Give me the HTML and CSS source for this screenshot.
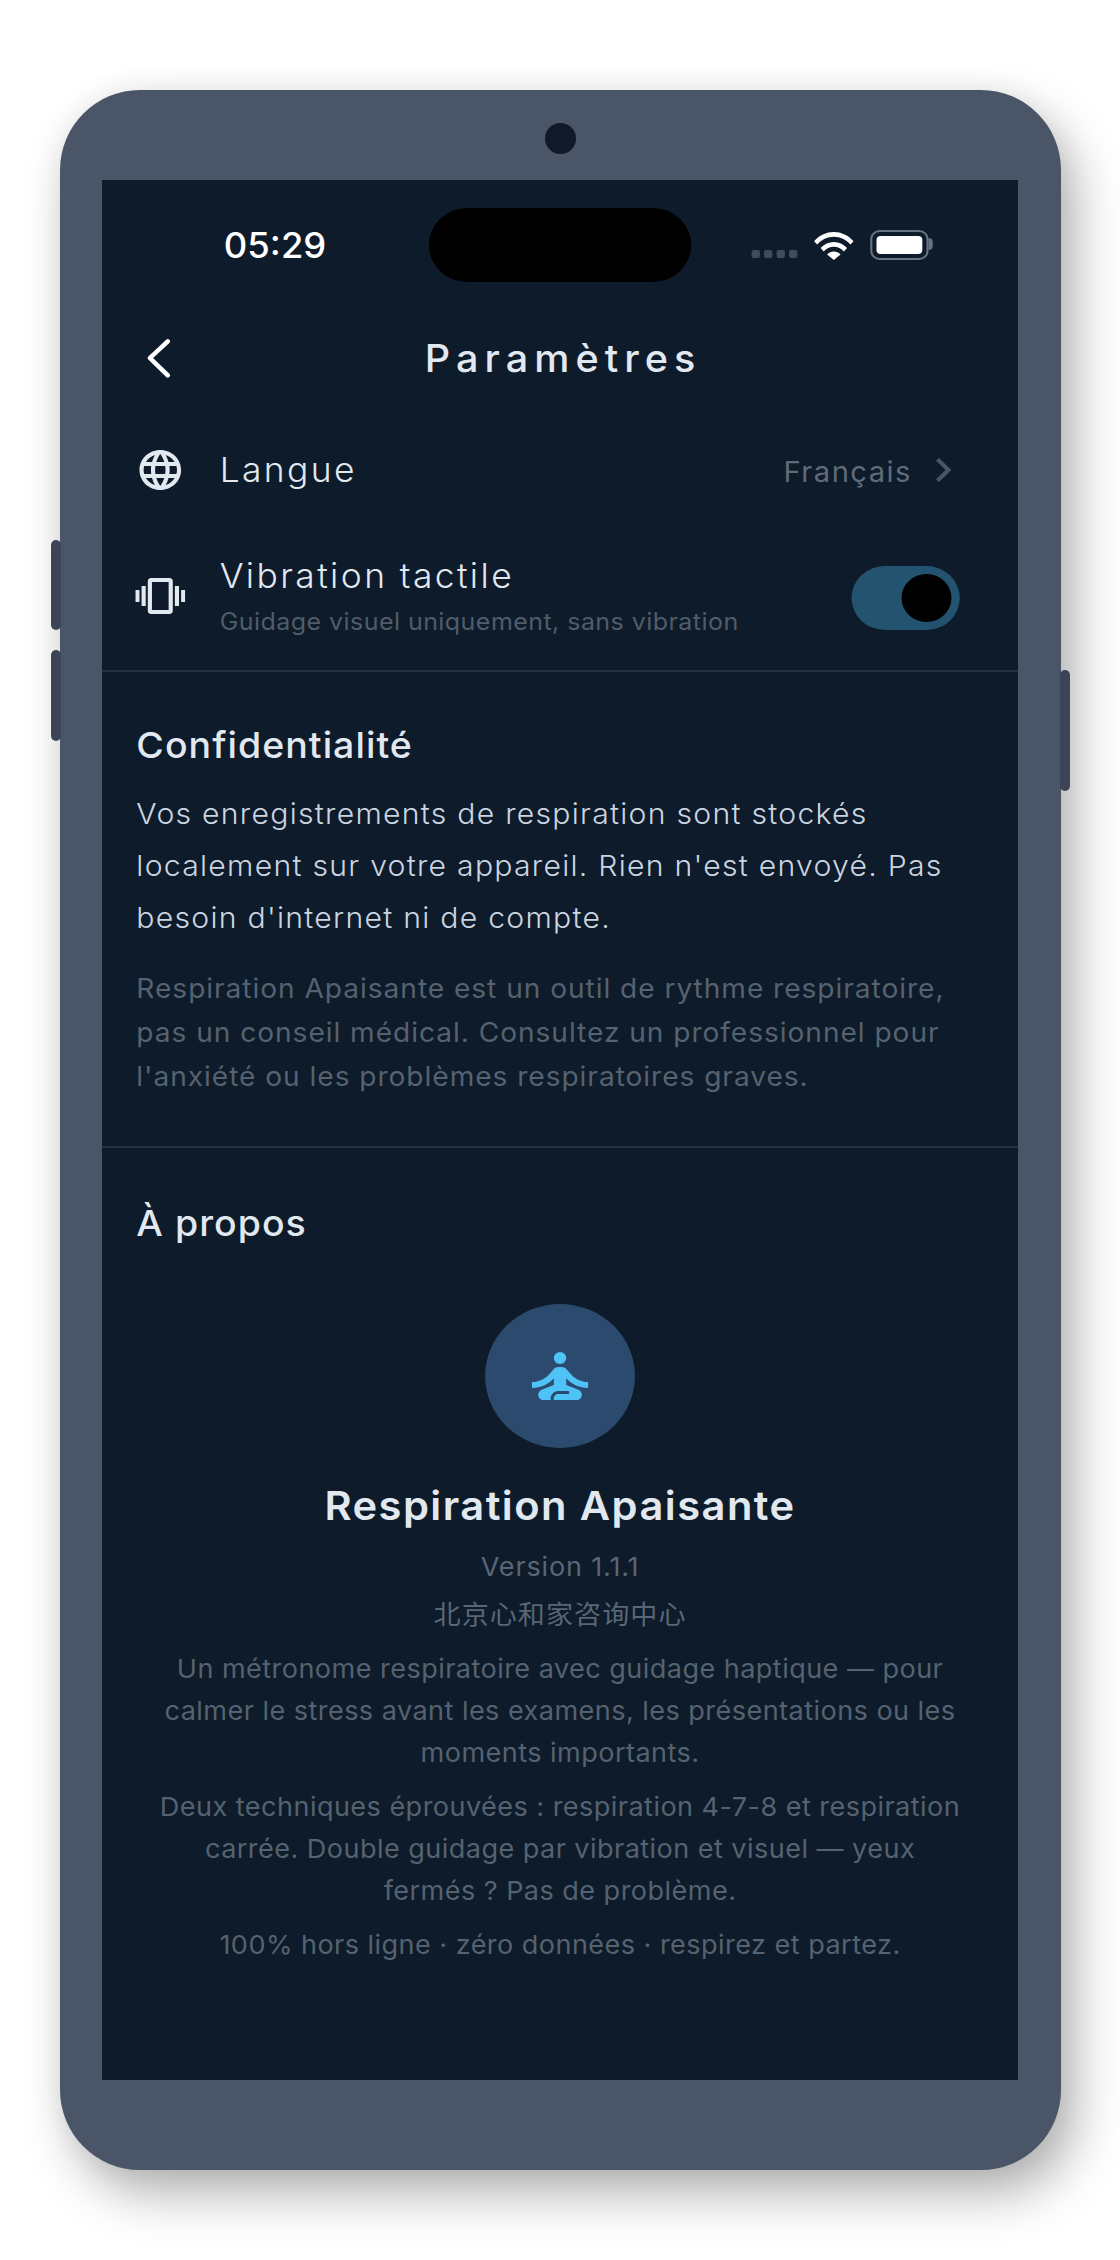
FILE: index.html
```html
<!DOCTYPE html>
<html lang="fr">
<head>
  <meta charset="UTF-8">
  <title>Paramètres</title>
  <link rel="stylesheet" href="styles.css">
</head>
<body>

  <div class="phone">
    <span class="side-btn vol-up"></span>
    <span class="side-btn vol-down"></span>
    <span class="side-btn power"></span>
    <div class="camera"></div>

    <div class="screen">
      <div class="app">

        <div class="status-bar">
          <span class="time">05:29</span>
          <div class="island"></div>
          <div class="status-icons">
            <div class="signal"><i></i><i></i><i></i><i></i></div>
            <svg class="wifi" viewBox="0 0 20 14" preserveAspectRatio="none">
              <path d="M0 4.6C2.6 1.7 6.1 0 10 0s7.4 1.7 10 4.6l-1.6 1.7C16.200 3.900 13.300 2.400 10 2.400S3.800 3.900 1.600 6.300z"/>
              <path d="M3.300 8C5.100 6.100 7.400 5 10 5s4.900 1.100 6.700 3l-1.600 1.700C13.800 8.300 12 7.400 10 7.400S6.200 8.300 4.900 9.700z"/>
              <path d="M6.600 11.300C7.500 10.400 8.700 9.800 10 9.800s2.500.6 3.400 1.500L10 14z"/>
            </svg>
            <div class="battery"><div class="battery-fill"></div></div>
          </div>
        </div>

        <header class="top-bar">
          <svg class="back" viewBox="0 0 24 24"><path d="M15.600 3.700L7 12l8.600 8.700"/></svg>
          <h1>Paramètres</h1>
        </header>

        <div class="row row-lang">
          <svg class="icon" viewBox="0 0 24 24"><path d="M11.990 2C6.470 2 2 6.480 2 12s4.470 10 9.990 10C17.520 22 22 17.520 22 12S17.520 2 11.990 2zm6.930 6h-2.950c-.32-1.250-.78-2.450-1.380-3.560 1.840.63 3.370 1.910 4.330 3.560zM12 4.040c.83 1.200 1.480 2.530 1.910 3.960h-3.820c.43-1.430 1.080-2.760 1.910-3.960zM4.260 14C4.100 13.360 4 12.690 4 12s.1-1.360.26-2h3.380c-.08.66-.14 1.320-.14 2 0 .68.06 1.340.14 2H4.260zm.82 2h2.950c.32 1.250.78 2.450 1.380 3.560-1.840-.63-3.370-1.900-4.330-3.560zm2.950-8H5.080c.96-1.660 2.490-2.930 4.330-3.560C8.810 5.550 8.350 6.750 8.030 8zM12 19.960c-.83-1.200-1.480-2.530-1.910-3.960h3.820c-.43 1.430-1.080 2.760-1.910 3.960zM14.340 14H9.660c-.09-.66-.16-1.320-.16-2 0-.68.07-1.350.16-2h4.680c.09.65.16 1.320.16 2 0 .68-.07 1.340-.16 2zm.25 5.560c.6-1.110 1.060-2.310 1.380-3.560h2.950c-.96 1.650-2.490 2.930-4.330 3.560zM16.360 14c.08-.66.14-1.320.14-2 0-.68-.06-1.340-.14-2h3.380c.16.64.26 1.310.26 2s-.1 1.360-.26 2h-3.380z"/></svg>
          <span class="row-title">Langue</span>
          <span class="row-value">Français</span>
          <svg class="chevron" viewBox="0 0 24 24"><path d="M10 6L8.590 7.410 13.170 12l-4.580 4.590L10 18l6-6z"/></svg>
        </div>

        <div class="row row-vib">
          <svg class="icon" viewBox="0 0 24 24"><path d="M0 15h2V9H0v6zm3 2h2V7H3v10zm19-8v6h2V9h-2zm-3 8h2V7h-2v10zM16.500 3h-9C6.670 3 6 3.670 6 4.500v15c0 .83.67 1.500 1.500 1.500h9c.83 0 1.500-.67 1.500-1.500v-15c0-.83-.67-1.500-1.500-1.500zM16 19H8V5h8v14z"/></svg>
          <div class="row-text">
            <div class="row-title">Vibration tactile</div>
            <div class="row-sub">Guidage visuel uniquement, sans vibration</div>
          </div>
          <div class="toggle"><div class="thumb"></div></div>
        </div>

        <section class="block privacy">
          <h2>Confidentialité</h2>
          <p class="lead">Vos enregistrements de respiration sont stockés localement sur votre appareil. Rien n'est envoyé. Pas besoin d'internet ni de compte.</p>
          <p class="note">Respiration Apaisante est un outil de rythme respiratoire, pas un conseil médical. Consultez un professionnel pour l'anxiété ou les problèmes respiratoires graves.</p>
        </section>

        <section class="block about">
          <h2>À propos</h2>
          <div class="logo">
            <svg viewBox="0 0 24 24"><circle cx="12" cy="6" r="2"/><path d="M21 16v-2c-2.240 0-4.160-.96-5.600-2.680l-1.340-1.600C13.680 9.260 13.120 9 12.530 9h-1.050c-.59 0-1.150.26-1.530.72l-1.340 1.600C7.160 13.040 5.240 14 3 14v2c2.770 0 5.190-1.170 7-3.250V15l-3.880 1.550c-.67.27-1.120.93-1.120 1.660C5 19.200 5.800 20 6.790 20H9v-.5c0-1.380 1.120-2.500 2.500-2.500h3c.28 0 .5.22.5.5s-.22.5-.5.5h-3c-.83 0-1.500.67-1.500 1.500v.5h7.210c.99 0 1.790-.8 1.790-1.790 0-.73-.45-1.390-1.120-1.660L14 15v-2.250c1.810 2.080 4.230 3.250 7 3.250z"/></svg>
          </div>
          <h3>Respiration Apaisante</h3>
          <div class="version">Version 1.1.1</div>
          <div class="company">北京心和家咨询中心</div>
          <p class="desc">Un métronome respiratoire avec guidage haptique — pour calmer le stress avant les examens, les présentations ou les moments importants.</p>
          <p class="desc">Deux techniques éprouvées&nbsp;: respiration 4-7-8 et respiration carrée. Double guidage par vibration et visuel — yeux fermés&nbsp;? Pas de problème.</p>
          <p class="desc">100% hors ligne · zéro données · respirez et partez.</p>
        </section>

      </div>
    </div>
  </div>

</body>
</html>
```

FILE: styles.css
```css
* {
  box-sizing: border-box;
  margin: 0;
  padding: 0;
}

body {
  background: #fff;
  font-family: Inter, "Noto Sans CJK SC", sans-serif;
  padding: 90px 60px;
}

/* device frame */
.phone {
  position: relative;
  width: 1001px;
  height: 2080px;
  padding: 90px 43px 90px 42px;
  background: #4a5568;
  border-radius: 80px;
  box-shadow: 14px 24px 50px rgba(0, 0, 0, 0.3), 0 0 30px rgba(0, 0, 0, 0.06);
}

.side-btn {
  position: absolute;
  background: #3c4558;
  width: 10px;
  border-radius: 5px;
}

.vol-up {
  left: -9px;
  top: 450px;
  height: 90px;
}

.vol-down {
  left: -9px;
  top: 560px;
  height: 91px;
}

.power {
  right: -9px;
  top: 580px;
  height: 121px;
}

.camera {
  position: absolute;
  top: 33px;
  left: 485px;
  width: 31px;
  height: 31px;
  border-radius: 50%;
  background: #111827;
}

.screen {
  width: 916px;
  height: 1900px;
  background: #0d1b2a;
  overflow: hidden;
}

/* the app is laid out at its own 440x950 size and stretched to the screen */
.app {
  width: 440px;
  height: 950px;
  padding-top: 14px;
  transform: scale(2.082, 2);
  transform-origin: 0 0;
  color: #e2e8f0;
}

.status-bar {
  display: flex;
  align-items: center;
  height: 37px;
}

.time {
  width: 157px;
  padding-left: 58.500px;
  font-size: 17.500px;
  font-weight: 500;
  color: #fff;
}

.island {
  width: 125.500px;
  height: 36.500px;
  border-radius: 19px;
  background: #000;
}

.status-icons {
  display: flex;
  align-items: center;
  padding-left: 29.500px;
  height: 37px;
}

.signal {
  display: flex;
  gap: 2.300px;
  align-self: flex-end;
  margin-bottom: 12px;
  margin-right: 8px;
}

.signal i {
  width: 3.800px;
  height: 4px;
  border-radius: 1px;
  background: #3f4c5a;
}

.wifi {
  width: 19px;
  height: 14px;
  fill: #fff;
  margin-right: 7.500px;
}

.battery {
  position: relative;
  width: 28.200px;
  height: 14.500px;
  padding: 2px;
  border: 1.300px solid #68737f;
  border-radius: 4.500px;
}

.battery::after {
  content: "";
  position: absolute;
  right: -3.600px;
  top: 3px;
  width: 2px;
  height: 5.500px;
  background: #68737f;
  border-radius: 0 2px 2px 0;
}

.battery-fill {
  height: 100%;
  background: #fff;
  border-radius: 2px;
}

.top-bar {
  position: relative;
  height: 56px;
  margin-top: 10px;
  display: flex;
  align-items: center;
  justify-content: center;
}

.top-bar h1 {
  padding-left: 3px;
  font-size: 19px;
  font-weight: 500;
  letter-spacing: 2.900px;
}

.back {
  position: absolute;
  left: 16px;
  top: 16px;
  width: 24px;
  height: 24px;
  fill: none;
  stroke: #fff;
  stroke-width: 2.200;
  stroke-linecap: round;
  stroke-linejoin: round;
}

.row {
  display: flex;
  align-items: center;
  padding: 0 28px 0 16px;
}

.row-lang {
  height: 50px;
  margin-top: 3px;
}

.row-vib {
  height: 64px;
  margin-top: 6px;
}

.icon {
  width: 24px;
  height: 24px;
  fill: #e2e8f0;
  flex: none;
  margin-right: 16.500px;
}

.row-title {
  font-size: 17px;
  font-weight: 300;
  letter-spacing: 1.150px;
}

.row-lang .row-title {
  flex: 1;
}

.row-value {
  font-size: 14px;
  letter-spacing: 0.700px;
  color: #5f6b78;
}

.chevron {
  width: 24px;
  height: 24px;
  fill: #4b5662;
  margin-left: 3px;
  margin-right: -4px;
}

.row-text {
  flex: 1;
}

.row-sub {
  font-size: 12px;
  letter-spacing: 0.220px;
  color: #505c69;
  margin-top: 4.500px;
}

.toggle {
  width: 52.500px;
  height: 32px;
  margin-top: 1px;
  border-radius: 16px;
  background: #23536f;
  padding: 4px;
  display: flex;
  justify-content: flex-end;
}

.thumb {
  width: 24px;
  height: 24px;
  border-radius: 50%;
  background: #000;
}

.block {
  border-top: 1px solid #243244;
  padding: 27px 16.500px 24px;
}

.block h2 {
  font-size: 18px;
  font-weight: 500;
  letter-spacing: 0.500px;
}

.privacy {
  margin-top: 4.500px;
  padding-top: 26.500px;
  padding-bottom: 23.300px;
}

.lead {
  margin-top: 10.700px;
  font-size: 14.500px;
  font-weight: 300;
  line-height: 26px;
  letter-spacing: 0.600px;
  color: #cbd5e1;
}

.note {
  margin-top: 11.700px;
  font-size: 13.500px;
  line-height: 22px;
  letter-spacing: 0.460px;
  color: #56626f;
}

.about {
  text-align: center;
}

.about h2 {
  text-align: left;
}

.logo {
  width: 72px;
  height: 72px;
  margin: 30.500px auto 0;
  border-radius: 50%;
  background: #2c4a6e;
  display: flex;
  align-items: center;
  justify-content: center;
}

.logo svg {
  width: 36px;
  height: 36px;
  fill: #4fc3f7;
}

.about h3 {
  margin-top: 16.500px;
  font-size: 20px;
  font-weight: 600;
  letter-spacing: 0.700px;
}

.version {
  margin-top: 10px;
  font-size: 13px;
  letter-spacing: 0.400px;
  color: #5a6675;
}

.company {
  margin-top: 6px;
  font-size: 13px;
  letter-spacing: 0.500px;
  color: #5a6675;
}

.desc {
  margin-top: 6px;
  padding: 0 9.500px;
  font-size: 13px;
  line-height: 21px;
  letter-spacing: 0.215px;
  color: #56626f;
}

.company + .desc {
  margin-top: 8.500px;
}
```
